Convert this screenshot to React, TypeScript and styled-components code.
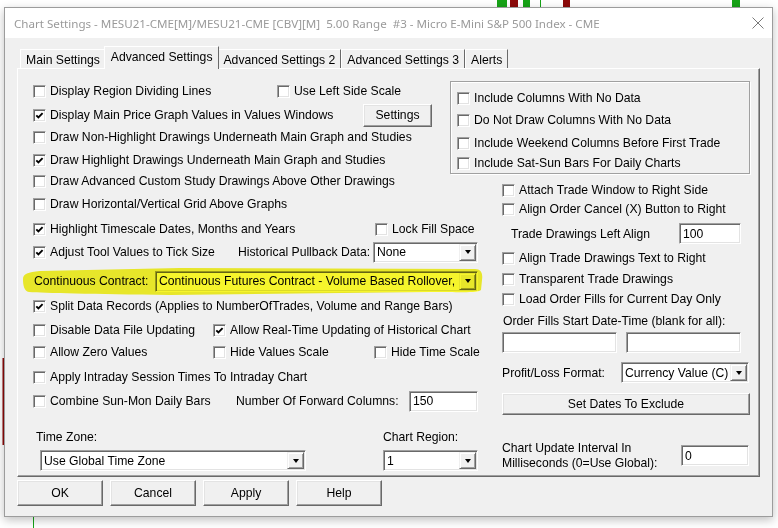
import React from 'react';
import styled, { createGlobalStyle } from 'styled-components';

const GlobalStyle = createGlobalStyle`
  html, body {
    margin: 0;
    padding: 0;
    background: #fff;
  }
  body {
    font-family: "Liberation Sans", Arial, sans-serif;
    font-size: 12.2px;
    color: #000;
  }
`;

const Stage = styled.div`
  position: relative;
  width: 778px;
  height: 528px;
  overflow: hidden;
  box-sizing: border-box;
  padding: 7px 0 0 4px;
`;

const Backdrop = styled.svg`
  position: absolute;
  left: 0;
  top: 0;
`;

const Window = styled.div`
  position: relative;
  width: 769px;
  height: 510px;
  box-sizing: border-box;
  border: 1px solid #9c9c9c;
  background: #f0f0f0;
  box-shadow: 0 3px 9px rgba(0, 0, 0, 0.25);
  display: flex;
  flex-direction: column;
`;

const TitleBar = styled.div`
  height: 30px;
  flex: none;
  background: #fff;
  display: flex;
  align-items: center;
  justify-content: space-between;
  padding: 0 8px 0 9px;
  font-family: "Noto Sans", "Open Sans", sans-serif;
  font-size: 11.6px;
  color: #9a9a9a;
  white-space: pre;
`;

const Body = styled.div`
  padding: 8px 12px 0;
  display: flex;
  flex-direction: column;
`;

const TabStrip = styled.div`
  position: relative;
  z-index: 1;
  height: 23px;
  margin-bottom: -1px;
  padding-left: 3px;
  display: flex;
  align-items: flex-end;
`;

const Tab = styled.div<{ $active?: boolean }>`
  box-sizing: border-box;
  height: ${p => (p.$active ? 23 : 19)}px;
  margin: ${p => (p.$active ? '0 -2px 0 -2px' : '0 0 1px 0')};
  padding: ${p => (p.$active ? '0 6px 2px' : '2px 5px 0')};
  position: relative;
  z-index: ${p => (p.$active ? 1 : 0)};
  display: flex;
  align-items: center;
  background: #f0f0f0;
  border-top: 1px solid #fff;
  border-left: 1px solid #fff;
  border-right: 1px solid #696969;
  white-space: nowrap;
`;

const Panel = styled.div`
  box-sizing: border-box;
  padding: 11px 8px 5px 15px;
  border-top: 1px solid #fff;
  border-left: 1px solid #fff;
  border-right: 1px solid #696969;
  border-bottom: 1px solid #696969;
  box-shadow: inset -1px -1px #a0a0a0;
  display: grid;
  grid-template-columns: 445px 248px;
  column-gap: 24px;
`;

const Column = styled.div`
  display: flex;
  flex-direction: column;
  min-width: 0;
`;

const Row = styled.div<{ $mt?: number; $h?: number }>`
  position: relative;
  display: flex;
  align-items: center;
  height: ${p => p.$h ?? 22}px;
  margin-top: ${p => p.$mt ?? 0}px;
  white-space: nowrap;
`;

const Cell = styled.div<{ $w?: number; $pl?: number }>`
  flex: none;
  display: flex;
  align-items: center;
  width: ${p => (p.$w ? `${p.$w}px` : 'auto')};
  padding-left: ${p => p.$pl ?? 0}px;
  box-sizing: border-box;
`;

const CheckLabel = styled.label`
  display: flex;
  align-items: center;
  gap: 4px;
`;

const Box = styled.span`
  box-sizing: border-box;
  width: 13px;
  height: 13px;
  flex: none;
  background: #fff;
  border-top: 1px solid #a0a0a0;
  border-left: 1px solid #a0a0a0;
  border-right: 1px solid #fff;
  border-bottom: 1px solid #fff;
  box-shadow: inset 1px 1px #696969, inset -1px -1px #e3e3e3;
  display: flex;
`;

const Sunken = styled.div<{ $w: number }>`
  box-sizing: border-box;
  width: ${p => p.$w}px;
  height: 21px;
  flex: none;
  background: #fff;
  border-top: 1px solid #a0a0a0;
  border-left: 1px solid #a0a0a0;
  border-right: 1px solid #fff;
  border-bottom: 1px solid #fff;
  box-shadow: inset 1px 1px #696969, inset -1px -1px #e3e3e3;
  display: flex;
  align-items: stretch;
`;

const FieldText = styled.span`
  flex: 1;
  min-width: 0;
  overflow: hidden;
  padding: 0 0 0 3px;
  display: flex;
  align-items: center;
  white-space: nowrap;
`;

const ArrowBtn = styled.span`
  box-sizing: border-box;
  width: 17px;
  flex: none;
  margin: 1px 1px 1px 0;
  background: #f0f0f0;
  border-top: 1px solid #f0f0f0;
  border-left: 1px solid #f0f0f0;
  border-right: 1px solid #696969;
  border-bottom: 1px solid #696969;
  box-shadow: inset 1px 1px #fff, inset -1px -1px #a0a0a0;
  display: flex;
  align-items: center;
  justify-content: center;

  &::after {
    content: '';
    width: 0;
    height: 0;
    border-left: 3.5px solid transparent;
    border-right: 3.5px solid transparent;
    border-top: 4px solid #000;
  }
`;

const Button = styled.button<{ $w: number; $h?: number }>`
  box-sizing: border-box;
  width: ${p => p.$w}px;
  height: ${p => p.$h ?? 26}px;
  flex: none;
  padding: 0;
  font: inherit;
  color: #000;
  background: #f0f0f0;
  border-top: 1px solid #fff;
  border-left: 1px solid #fff;
  border-right: 1px solid #696969;
  border-bottom: 1px solid #696969;
  box-shadow: inset -1px -1px #a0a0a0, inset 1px 1px #e3e3e3;
`;

const GroupBox = styled.div`
  box-sizing: border-box;
  width: 300px;
  height: 93px;
  margin: 1px 0 0 -52px;
  padding: 6px 0 0 6px;
  border: 1px solid #a0a0a0;
  box-shadow: inset 1px 1px #fff, 1px 1px #fff;
  display: flex;
  flex-direction: column;
`;

const TwoLine = styled.div`
  line-height: 15px;
  white-space: nowrap;
`;

const Highlight = styled.svg`
  position: absolute;
  left: -13px;
  top: -4px;
  pointer-events: none;
  mix-blend-mode: multiply;
  z-index: 2;
`;

const Footer = styled.div`
  margin-top: 3px;
  display: flex;
  gap: 7px;
`;

const Check = ({ on, label }: { on?: boolean; label: string }) => (
  <CheckLabel>
    <Box>
      {on && (
        <svg width="11" height="11" viewBox="0 0 11 11">
          <path d="M2.3 5.3 L4.4 7.4 L8.6 3.1" fill="none" stroke="#000" strokeWidth="1.9" />
        </svg>
      )}
    </Box>
    <span>{label}</span>
  </CheckLabel>
);

const Select = ({ w, value }: { w: number; value: string }) => (
  <Sunken $w={w}>
    <FieldText>{value}</FieldText>
    <ArrowBtn />
  </Sunken>
);

const Field = ({ w, value }: { w: number; value: string }) => (
  <Sunken $w={w}>
    <FieldText>{value}</FieldText>
  </Sunken>
);

const tabs = ['Main Settings', 'Advanced Settings', 'Advanced Settings 2', 'Advanced Settings 3', 'Alerts'];

const App = () => {
  return (
    <>
      <GlobalStyle />
      <Stage>
        <Backdrop width="778" height="528" viewBox="0 0 778 528">
          <rect x="497" y="0" width="10" height="8" fill="#17a317" />
          <rect x="510" y="0" width="8" height="8" fill="#8c0a0a" />
          <rect x="523" y="0" width="7" height="8" fill="#17a317" />
          <rect x="540" y="0" width="1" height="8" fill="#17a317" />
          <rect x="563" y="0" width="7" height="8" fill="#8c0a0a" />
          <rect x="732" y="0" width="8" height="8" fill="#17a317" />
          <rect x="2.5" y="358" width="1.5" height="87" fill="#8c0a0a" />
          <rect x="33" y="515" width="1" height="13" fill="#17a317" />
        </Backdrop>
        <Window>
          <TitleBar>
            <span>Chart Settings - MESU21-CME[M]/MESU21-CME [CBV][M]  5.00 Range  #3 - Micro E-Mini S&amp;P 500 Index - CME</span>
            <svg width="12" height="12" viewBox="0 0 12 12">
              <path d="M0.5 0.5 L11.5 11.5 M11.5 0.5 L0.5 11.5" stroke="#7a7a7a" strokeWidth="1" />
            </svg>
          </TitleBar>
          <Body>
            <TabStrip>
              {tabs.map(t => (
                <Tab key={t} $active={t === 'Advanced Settings'}>
                  {t}
                </Tab>
              ))}
            </TabStrip>
            <Panel>
              <Column>
                <Row>
                  <Cell $w={244}>
                    <Check label="Display Region Dividing Lines" />
                  </Cell>
                  <Check label="Use Left Side Scale" />
                </Row>
                <Row $mt={2}>
                  <Cell $w={330}>
                    <Check on label="Display Main Price Graph Values in Values Windows" />
                  </Cell>
                  <Button $w={69} $h={23}>Settings</Button>
                </Row>
                <Row>
                  <Check label="Draw Non-Highlight Drawings Underneath Main Graph and Studies" />
                </Row>
                <Row $mt={1}>
                  <Check on label="Draw Highlight Drawings Underneath Main Graph and Studies" />
                </Row>
                <Row $mt={-1}>
                  <Check label="Draw Advanced Custom Study Drawings Above Other Drawings" />
                </Row>
                <Row $mt={1}>
                  <Check label="Draw Horizontal/Vertical Grid Above Graphs" />
                </Row>
                <Row $mt={3}>
                  <Cell $w={342}>
                    <Check on label="Highlight Timescale Dates, Months and Years" />
                  </Cell>
                  <Check label="Lock Fill Space" />
                </Row>
                <Row $mt={1}>
                  <Cell $w={205}>
                    <Check on label="Adjust Tool Values to Tick Size" />
                  </Cell>
                  <Cell $w={135}>Historical Pullback Data:</Cell>
                  <Select w={105} value="None" />
                </Row>
                <Row $mt={7}>
                  <Cell $w={122} $pl={1}>Continuous Contract:</Cell>
                  <Select w={323} value="Continuous Futures Contract - Volume Based Rollover, Equal Weighted" />
                  <Highlight width="464" height="31" viewBox="0 0 464 31">
                    <path
                      d="M3 13 C3 8 8 6 20 5 L160 2 L455 3 C461 3 463 7 462 14 L461 24 C458 27 445 26 410 26 L150 29 C70 28 25 27 9 26 C4 25 3 19 3 13 Z"
                      fill="#f6f52c"
                    />
                  </Highlight>
                </Row>
                <Row $mt={3}>
                  <Check on label="Split Data Records (Applies to NumberOfTrades, Volume and Range Bars)" />
                </Row>
                <Row $mt={2}>
                  <Cell $w={180}>
                    <Check label="Disable Data File Updating" />
                  </Cell>
                  <Check on label="Allow Real-Time Updating of Historical Chart" />
                </Row>
                <Row>
                  <Cell $w={180}>
                    <Check label="Allow Zero Values" />
                  </Cell>
                  <Cell $w={161}>
                    <Check label="Hide Values Scale" />
                  </Cell>
                  <Check label="Hide Time Scale" />
                </Row>
                <Row $mt={3}>
                  <Check label="Apply Intraday Session Times To Intraday Chart" />
                </Row>
                <Row $mt={2}>
                  <Cell $w={203}>
                    <Check label="Combine Sun-Mon Daily Bars" />
                  </Cell>
                  <Cell $w={173}>Number Of Forward Columns:</Cell>
                  <Field w={69} value="150" />
                </Row>
                <Row $mt={17} $h={16}>
                  <Cell $w={350} $pl={3}>Time Zone:</Cell>
                  <span>Chart Region:</span>
                </Row>
                <Row $mt={5} $h={21}>
                  <Cell $w={350} $pl={7}>
                    <Select w={266} value="Use Global Time Zone" />
                  </Cell>
                  <Select w={95} value="1" />
                </Row>
              </Column>

              <Column>
                <GroupBox>
                  <Row $h={20}>
                    <Check label="Include Columns With No Data" />
                  </Row>
                  <Row $h={20} $mt={2}>
                    <Check label="Do Not Draw Columns With No Data" />
                  </Row>
                  <Row $h={20} $mt={3}>
                    <Check label="Include Weekend Columns Before First Trade" />
                  </Row>
                  <Row $h={20}>
                    <Check label="Include Sat-Sun Bars For Daily Charts" />
                  </Row>
                </GroupBox>
                <Row $h={20} $mt={6}>
                  <Check label="Attach Trade Window to Right Side" />
                </Row>
                <Row $h={20} $mt={-1}>
                  <Check label="Align Order Cancel (X) Button to Right" />
                </Row>
                <Row $h={21} $mt={4}>
                  <Cell $w={177} $pl={9}>Trade Drawings Left Align</Cell>
                  <Field w={62} value="100" />
                </Row>
                <Row $h={20} $mt={4}>
                  <Check label="Align Trade Drawings Text to Right" />
                </Row>
                <Row $h={20} $mt={1}>
                  <Check label="Transparent Trade Drawings" />
                </Row>
                <Row $h={20}>
                  <Check label="Load Order Fills for Current Day Only" />
                </Row>
                <Row $h={16} $mt={4}>
                  <Cell $pl={1}>Order Fills Start Date-Time (blank for all):</Cell>
                </Row>
                <Row $h={21} $mt={3}>
                  <Cell $w={124}>
                    <Field w={115} value="" />
                  </Cell>
                  <Field w={115} value="" />
                </Row>
                <Row $h={21} $mt={9}>
                  <Cell $w={119}>Profit/Loss Format:</Cell>
                  <Select w={128} value="Currency Value (C) and Ticks" />
                </Row>
                <Row $h={22} $mt={10}>
                  <Button $w={248} $h={22}>Set Dates To Exclude</Button>
                </Row>
                <Row $h={31} $mt={25}>
                  <Cell $w={179}>
                    <TwoLine>
                      Chart Update Interval In
                      <br />
                      Milliseconds (0=Use Global):
                    </TwoLine>
                  </Cell>
                  <Field w={68} value="0" />
                </Row>
              </Column>
            </Panel>
            <Footer>
              <Button $w={86}>OK</Button>
              <Button $w={86}>Cancel</Button>
              <Button $w={86}>Apply</Button>
              <Button $w={86}>Help</Button>
            </Footer>
          </Body>
        </Window>
      </Stage>
    </>
  );
};

export default App;
